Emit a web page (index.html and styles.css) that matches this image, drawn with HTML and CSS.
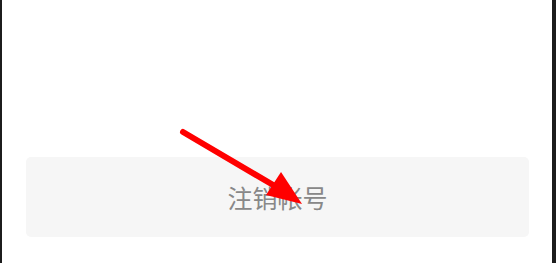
FILE: index.html
```html
<!DOCTYPE html>
<html>
<head>
  <meta charset="utf-8">
  <title>注销帐号</title>
  <link rel="stylesheet" href="styles.css">
</head>
<body>
  <div class="screen">
    <div class="actions">
      <button class="btn-cancel">注销帐号</button>
    </div>
    <!-- 标注箭头 -->
    <svg class="mark-arrow" width="556" height="263" viewBox="0 0 556 263">
      <line x1="183" y1="132" x2="280" y2="189" stroke="#f00" stroke-width="6" stroke-linecap="round"/>
      <polygon points="302,204 266,195 281,172" fill="#f00"/>
    </svg>
  </div>
</body>
</html>
```

FILE: styles.css
```css
html, body {
    margin: 0;
    padding: 0;
    background: #fff;
}

.screen {
    position: relative;
    width: 556px;
    height: 263px;
    box-sizing: border-box;
    border-left: 2px solid #1c1c1c;
    border-right: 4px solid #1c1c1c;
    background: #fff;
    overflow: hidden;
}

.actions {
    padding: 157px 23px 0 24px;
}

.btn-cancel {
    display: flex;
    align-items: center;
    justify-content: center;
    width: 100%;
    height: 80px;
    border: none;
    border-radius: 5px;
    background: #f6f6f6;
    color: #888;
    font-family: "Noto Sans CJK SC", "Noto Sans", sans-serif;
    font-size: 25px;
    padding: 0;
}

.mark-arrow {
    position: absolute;
    left: -2px;
    top: 0;
    pointer-events: none;
}
```
